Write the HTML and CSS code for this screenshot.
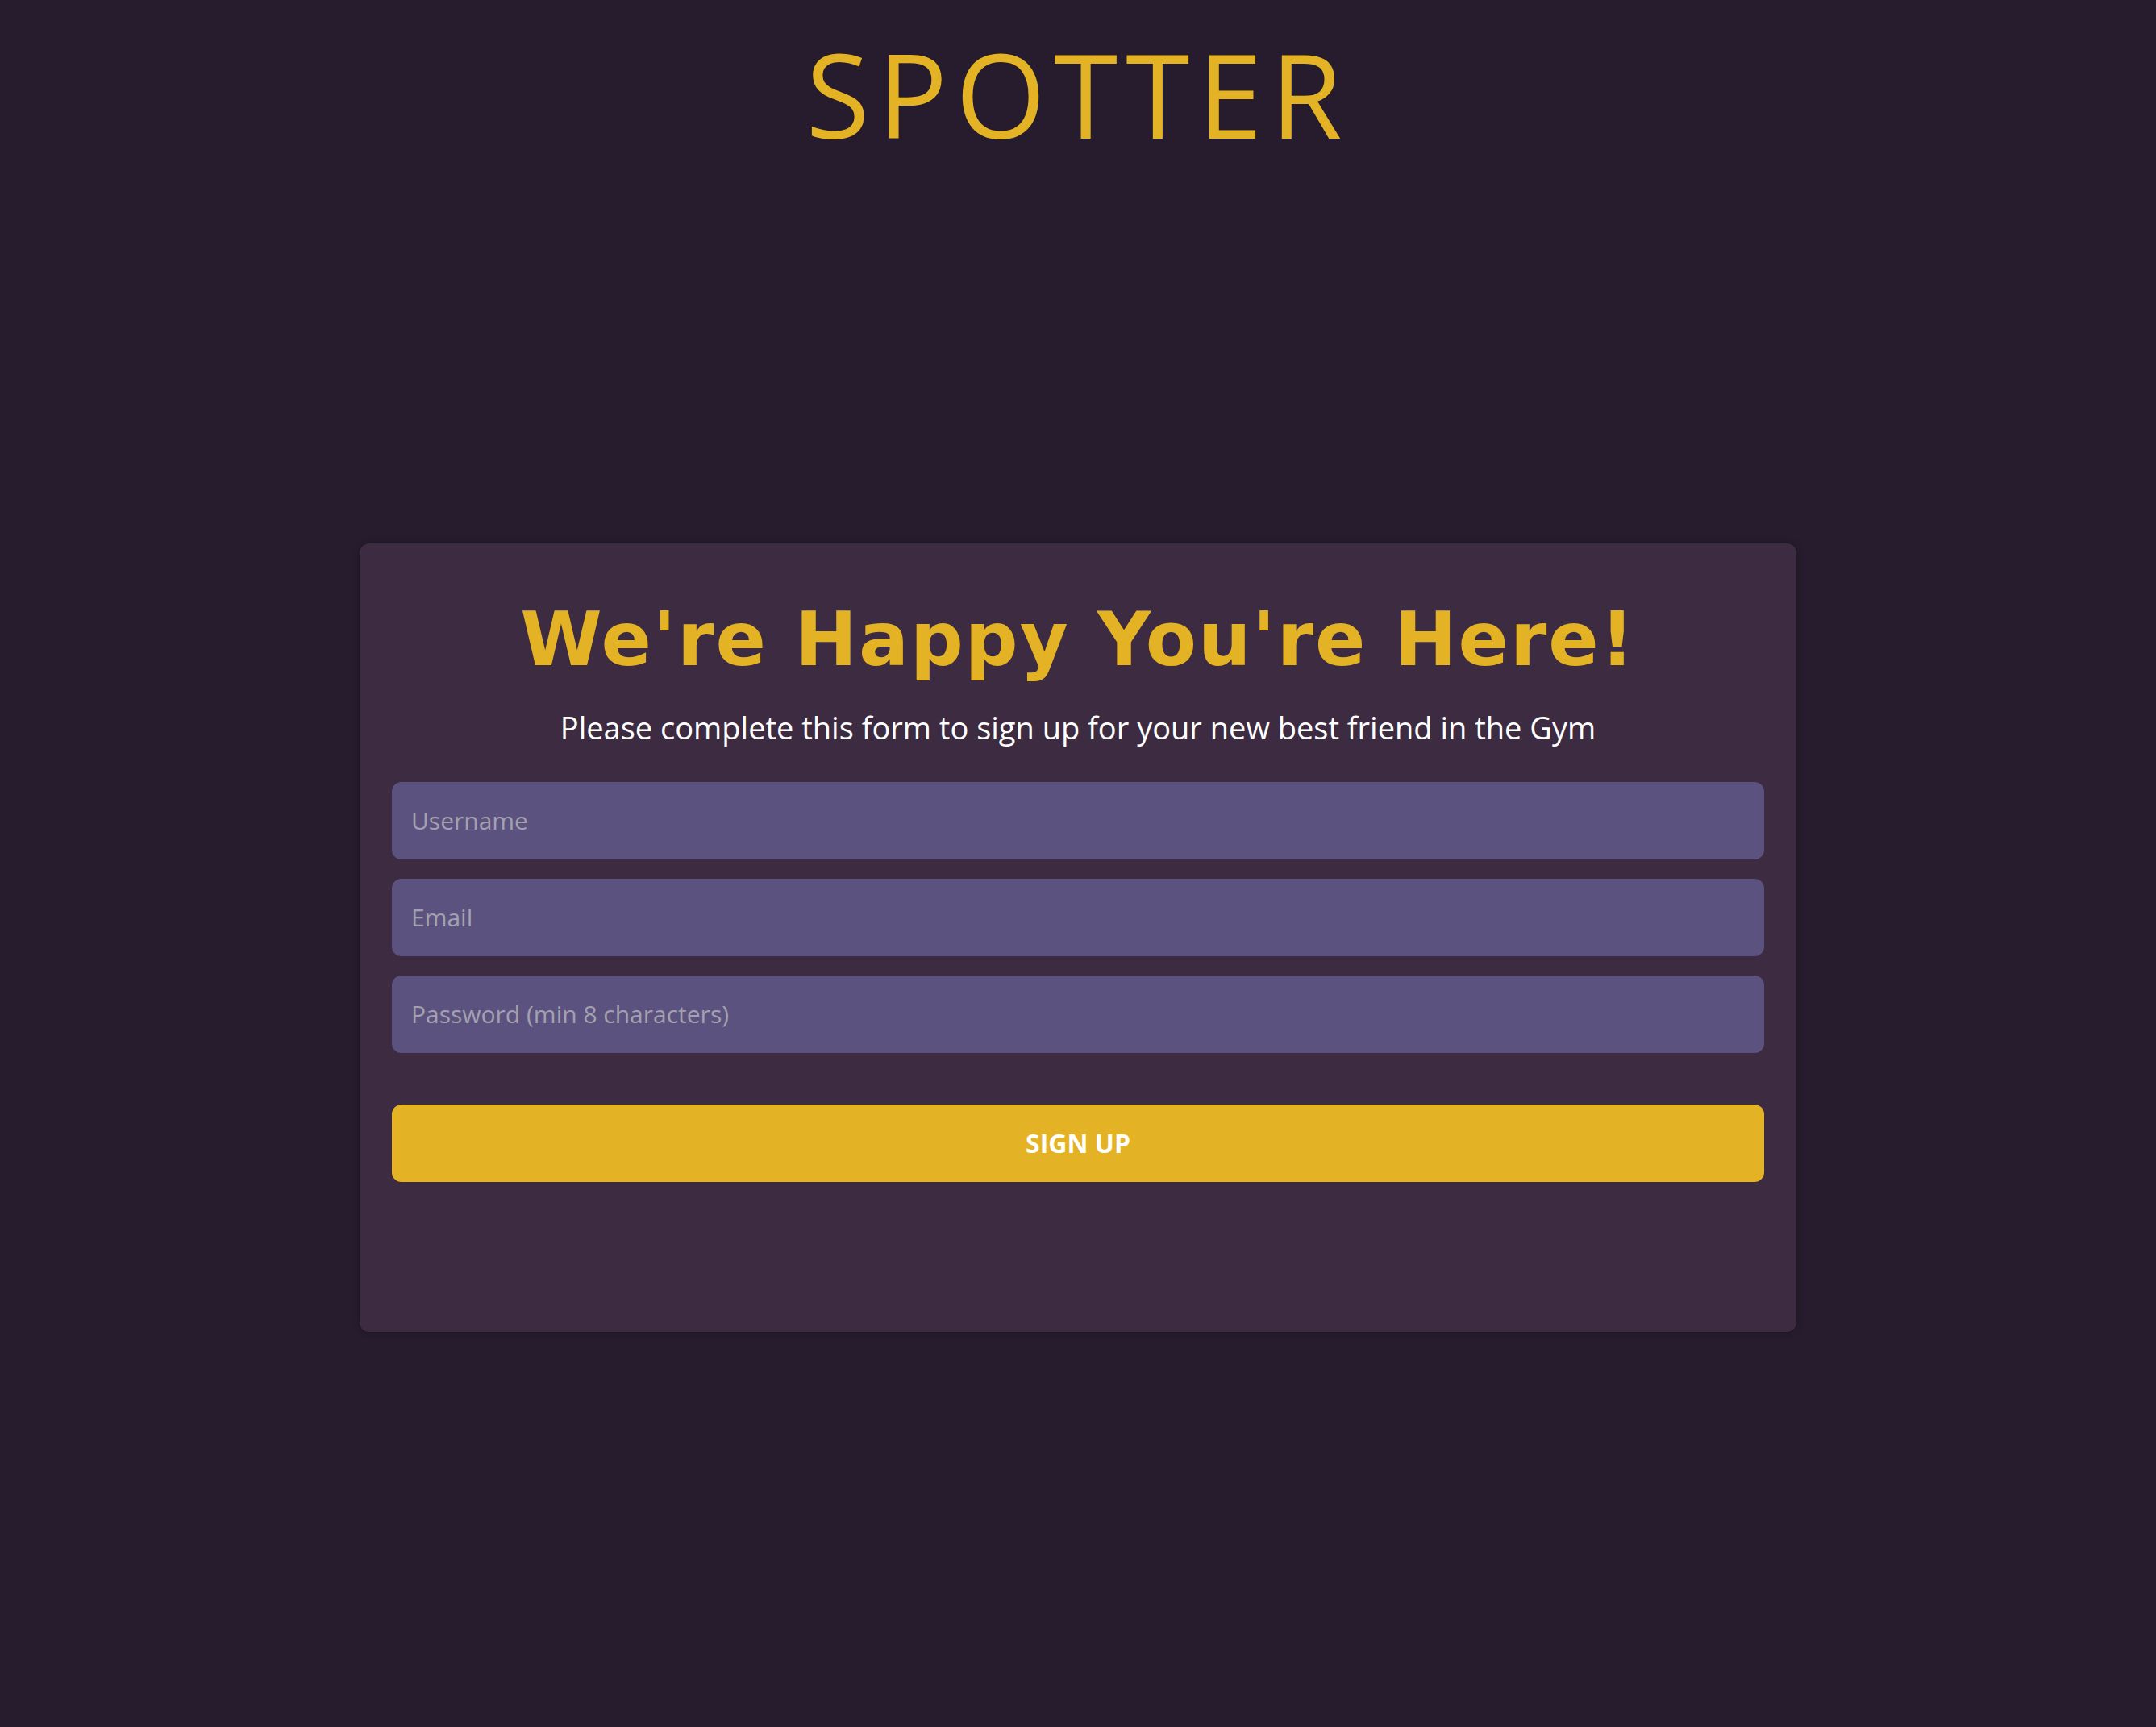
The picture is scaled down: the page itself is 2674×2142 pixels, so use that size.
FILE: index.html
```html
<!DOCTYPE html>
<html lang="en">
<head>
<meta charset="utf-8">
<title>Spotter - Sign Up</title>
<link rel="stylesheet" href="styles.css">
</head>
<body>
<header class="site-header">
  <h1 class="brand">SPOTTER</h1>
</header>
<main class="page">
  <section class="card">
    <h2 class="card-title">We're Happy You're Here!</h2>
    <p class="card-sub">Please complete this form to sign up for your new best friend in the Gym</p>
    <form class="signup-form">
      <input class="field" type="text" placeholder="Username">
      <input class="field" type="email" placeholder="Email">
      <input class="field" type="password" placeholder="Password (min 8 characters)">
      <button class="btn" type="button">SIGN UP</button>
    </form>
  </section>
</main>
</body>
</html>
```
FILE: styles.css
```css
* { box-sizing: border-box; }
html, body {
  margin: 0;
  padding: 0;
  background: #261c2d;
}
body {
  font-family: "Open Sans", "Noto Sans", sans-serif;
  color: #ffffff;
  min-height: 2142px;
}
.site-header {
  display: flex;
  justify-content: center;
  padding-top: 44px;
}
.brand {
  margin: 0;
  font-family: "Open Sans", "Noto Sans", sans-serif;
  font-weight: 400;
  font-size: 144px;
  line-height: 1;
  letter-spacing: 10px;
  color: #e4b325;
}
.page {
  display: flex;
  justify-content: center;
  padding-top: 486px;
}
.card {
  width: 1782px;
  background: #3d2c41;
  border-radius: 12px;
  box-shadow: 0 0 10px rgba(0, 0, 0, 0.25);
  padding: 65px 40px 186px;
  display: flex;
  flex-direction: column;
  align-items: center;
}
.card-title {
  margin: 0;
  font-family: "DejaVu Sans", Verdana, sans-serif;
  font-weight: 700;
  font-size: 92px;
  line-height: 1.2;
  letter-spacing: 2px;
  color: #e4b325;
}
.card-sub {
  margin: 29px 0 0;
  font-size: 38px;
  line-height: 1.3;
  color: #ffffff;
}
.signup-form {
  width: 100%;
  display: flex;
  flex-direction: column;
  gap: 24px;
  margin-top: 42px;
}
.field {
  display: block;
  width: 100%;
  height: 96px;
  border: none;
  outline: none;
  border-radius: 12px;
  background: #5c5280;
  padding: 0 24px;
  font-family: "Open Sans", "Noto Sans", sans-serif;
  font-size: 30px;
  color: #ffffff;
}
.field::placeholder {
  color: #a3a1ae;
}
.btn {
  display: block;
  width: 100%;
  height: 96px;
  margin-top: 40px;
  border: none;
  border-radius: 12px;
  background: #e4b325;
  color: #ffffff;
  font-family: "Open Sans", "Noto Sans", sans-serif;
  font-weight: 700;
  font-size: 32px;
  cursor: pointer;
}
```
